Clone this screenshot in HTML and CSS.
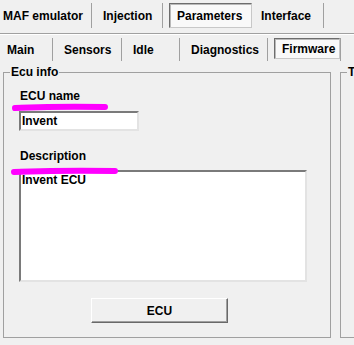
FILE: index.html
```html
<!DOCTYPE html>
<html lang="en">
<head>
    <meta charset="UTF-8">
    <meta name="viewport" content="width=device-width, initial-scale=1.0">
    <title>Parameters - Firmware</title>
    <link rel="stylesheet" href="styles.css">
</head>
<body>
    <div class="tabs tabs-top">
        <div class="tab first">MAF emulator</div>
        <div class="tab">Injection</div>
        <div class="tab active-cell"><span class="tab-box">Parameters</span></div>
        <div class="tab">Interface</div>
    </div>

    <div class="tabs tabs-sub">
        <div class="tab first">Main</div>
        <div class="tab">Sensors</div>
        <div class="tab">Idle</div>
        <div class="tab">Diagnostics</div>
        <div class="tab active-cell"><span class="tab-box">Firmware</span></div>
    </div>

    <div class="panels">
        <fieldset class="group ecu-info">
            <legend>Ecu info</legend>

            <label class="field-label" for="ecuName">ECU name</label>
            <input type="text" id="ecuName" class="edit" value="Invent">

            <label class="field-label desc-label" for="ecuDesc">Description</label>
            <textarea id="ecuDesc" class="edit memo">Invent ECU</textarea>

            <button type="button" class="win-btn">ECU</button>
        </fieldset>

        <fieldset class="group side-group">
            <legend>T</legend>
        </fieldset>
    </div>

    <!-- highlighter marks drawn over the form -->
    <svg class="marks" width="354" height="345" viewBox="0 0 354 345">
        <path d="M15 108 Q60 106 105 107" />
        <path d="M14 172 Q64 170 115 171" />
    </svg>
</body>
</html>
```

FILE: styles.css
```css
/* Base - classic Windows dialog look */
body {
    margin: 0;
    background: #f0f0f0;
    font-family: 'Liberation Sans', Arial, sans-serif;
    font-weight: bold;
    font-size: 12px;
    color: #000;
    width: 354px;
    height: 345px;
    overflow: hidden;
    position: relative;
}

/* Tab rows */
.tabs {
    display: grid;
    align-items: center;
}

.tabs-top {
    grid-template-columns: 92px 71px 87px 74px;
    height: 24px;
    padding: 3px 0 6px;
    border-bottom: 1px solid #a0a0a0;
    box-shadow: 0 1px 0 #fff;
}

.tabs-sub {
    grid-template-columns: 53px 69px 58px 88px 73px;
    height: 23px;
    padding-top: 4px;
}

.tab {
    height: 100%;
    display: flex;
    align-items: center;
    padding-left: 11px;
    border-right: 1px solid #a0a0a0;
    box-sizing: border-box;
    white-space: nowrap;
}

.tabs-top .tab.first {
    padding-left: 3px;
}

.tabs-sub .tab.first {
    padding-left: 7px;
}

.tab.active-cell {
    padding-left: 6px;
}

.tabs-top .tab.active-cell {
    border-right: none;
}

.tab-box {
    display: flex;
    align-items: center;
    height: 25px;
    padding: 0 9px 0 7px;
    box-sizing: border-box;
    background: #f9f9f9;
    border: 1px solid;
    border-color: #6d6d6d #c8c8c8 #c8c8c8 #6d6d6d;
    box-shadow: inset 1px 1px 0 #b9b9b9;
}

.tabs-sub .tab-box {
    height: 21px;
    margin-top: -2px;
    padding: 0 4px 0 7px;
}

/* Group boxes */
.panels {
    display: flex;
    gap: 9px;
    padding-left: 3px;
    margin-top: 4px;
}

.group {
    margin: 0;
    height: 273px;
    box-sizing: border-box;
    border: 1px solid #a0a0a0;
    padding: 0 0 0 15px;
    flex-shrink: 0;
}

.group legend {
    padding: 0 1px;
    margin-left: -9px;
    line-height: 14px;
}

.ecu-info {
    width: 328px;
}

.side-group {
    width: 200px;
}

/* Form elements */
.field-label {
    display: block;
    line-height: 14px;
    margin-top: 10px;
    padding-left: 1px;
}

.desc-label {
    margin-top: 18px;
}

.edit {
    display: block;
    font: inherit;
    color: #000;
    background: #fff;
    border: 2px solid;
    border-color: #7a7a7a #e3e3e3 #e3e3e3 #7a7a7a;
    padding: 0 1px;
    margin: 8px 0 0;
    width: 120px;
    height: 20px;
    box-sizing: border-box;
    outline: none;
    border-radius: 0;
}

.memo {
    width: 288px;
    height: 112px;
    margin-top: 7px;
    padding: 1px 1px;
    line-height: 14px;
    resize: none;
    overflow: hidden;
}

.win-btn {
    display: block;
    margin: 16px 0 0 72px;
    width: 137px;
    height: 25px;
    font: inherit;
    color: #000;
    background: #f0f0f0;
    border: 1px solid;
    border-color: #fff #696969 #696969 #fff;
    box-shadow: inset -1px -1px 0 #a0a0a0;
    border-radius: 0;
    padding: 0;
}

/* Highlighter overlay */
.marks {
    position: absolute;
    left: 0;
    top: 0;
    pointer-events: none;
}

.marks path {
    fill: none;
    stroke: #ff00ff;
    stroke-width: 6;
    stroke-linecap: round;
}
```
